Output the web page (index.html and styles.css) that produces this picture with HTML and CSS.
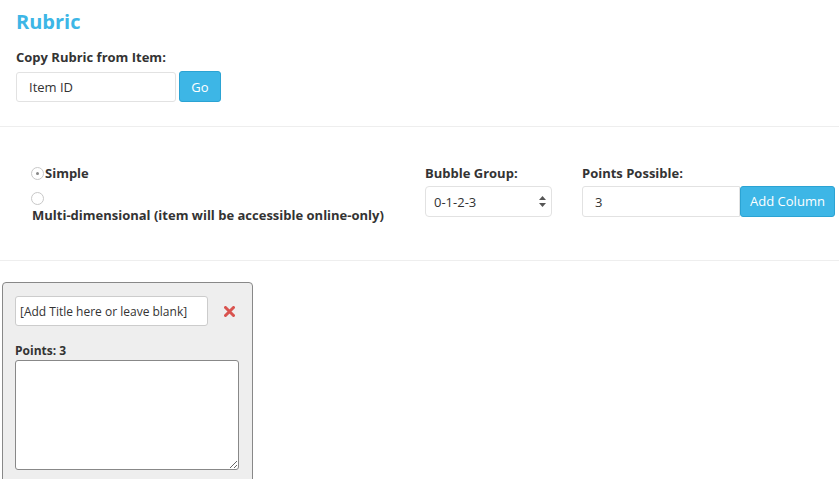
FILE: index.html
```html
<!DOCTYPE html>
<html lang="en">
<head>
<meta charset="UTF-8" />
<meta name="viewport" content="width=device-width, initial-scale=1.0" />
<title>Rubric</title>
<link rel="stylesheet" href="styles.css">
</head>
<body>
  <div class="copy-section">
    <h1>Rubric</h1>
    <label class="field-label" for="itemId">Copy Rubric from Item:</label>
    <div class="copy-row">
      <input type="text" id="itemId" class="text-input item-input" placeholder="Item ID" />
      <button class="btn go-btn">Go</button>
    </div>
  </div>

  <div class="options-section">
    <div class="type-choice">
      <label class="radio-line">
        <span class="radio checked"></span>Simple
      </label>
      <span class="radio"></span>
      <div class="multi-label">Multi-dimensional (item will be accessible online-only)</div>
    </div>

    <div class="bubble-group">
      <div class="field-label">Bubble Group:</div>
      <div class="select-wrap">
        <select class="bubble-select">
          <option>0-1-2-3</option>
        </select>
        <svg class="select-arrows" width="7" height="11" viewBox="0 0 7 11">
          <path d="M3.5 0 L7 4 L0 4 Z" fill="#555" />
          <path d="M3.5 11 L7 7 L0 7 Z" fill="#555" />
        </svg>
      </div>
    </div>

    <div class="points-group">
      <div class="field-label">Points Possible:</div>
      <div class="points-row">
        <input type="text" class="text-input points-input" value="3" />
        <button class="btn add-btn">Add Column</button>
      </div>
    </div>
  </div>

  <div class="columns-section">
    <div class="rubric-card">
      <div class="card-top">
        <input type="text" class="text-input title-input" value="[Add Title here or leave blank]" />
        <svg class="remove-icon" width="11" height="11" viewBox="0 0 11 11">
          <path d="M1.5 1.5 L9.5 9.5 M9.5 1.5 L1.5 9.5" stroke="#d9534f" stroke-width="3" stroke-linecap="round" />
        </svg>
      </div>
      <div class="points-label">Points: 3</div>
      <textarea class="card-text"></textarea>
    </div>
  </div>
</body>
</html>
```

FILE: styles.css
```css
body {
  font-family: "Open Sans", Arial, sans-serif;
  font-size: 13px;
  color: #333;
  background: #fff;
  margin: 0;
  padding: 0;
}

h1 {
  font-size: 20px;
  line-height: 28px;
  font-weight: 700;
  color: #3db6e6;
  margin: 0 0 12px;
}

.copy-section {
  padding: 8px 16px 24px;
  border-bottom: 1px solid #eee;
}

.field-label {
  display: block;
  font-weight: 700;
  font-size: 13px;
  line-height: 18px;
  margin-bottom: 5px;
}

.copy-row,
.points-row {
  display: flex;
  align-items: center;
}

.text-input {
  font-family: "Open Sans", Arial, sans-serif;
  font-size: 13px;
  color: #333;
  height: 30px;
  box-sizing: border-box;
  border: 1px solid #e2e2e2;
  border-radius: 3px;
  padding: 0 12px;
  background: #fff;
  outline: none;
}

.text-input::placeholder {
  color: #333;
}

.item-input {
  width: 160px;
}

.btn {
  font-family: "Open Sans", Arial, sans-serif;
  font-size: 13px;
  color: #fff;
  background: #3db6e6;
  border: 1px solid #2ba3d3;
  border-radius: 3px;
  height: 31px;
  padding: 0 12px;
  cursor: pointer;
}

.go-btn {
  margin-left: 3px;
  width: 42px;
  padding: 0;
}

.options-section {
  display: flex;
  padding: 37px 0 36px 30px;
  border-bottom: 1px solid #eee;
}

.options-section .field-label {
  margin-bottom: 4px;
}

.type-choice {
  width: 395px;
}

.radio-line {
  display: flex;
  align-items: center;
  font-weight: 700;
  line-height: 18px;
  height: 18px;
}

.radio {
  display: block;
  width: 11px;
  height: 11px;
  border: 1px solid #c8c8c8;
  border-radius: 50%;
  position: relative;
  margin: 1px 1px 0 1px;
}

.radio.checked::after {
  content: "";
  position: absolute;
  left: 4px;
  top: 4px;
  width: 3px;
  height: 3px;
  border-radius: 50%;
  background: #888;
}

.type-choice > .radio {
  margin-top: 10px;
}

.multi-label {
  font-weight: 700;
  line-height: 18px;
  margin: 1px 0 0 2px;
}

.bubble-group {
  width: 157px;
}

.select-wrap {
  position: relative;
  width: 127px;
}

.bubble-select {
  appearance: none;
  -webkit-appearance: none;
  width: 127px;
  height: 31px;
  font-family: "Open Sans", Arial, sans-serif;
  font-size: 13px;
  color: #333;
  background: #fff;
  border: 1px solid #e2e2e2;
  border-radius: 4px;
  padding: 0 8px;
  outline: none;
}

.select-arrows {
  position: absolute;
  right: 6px;
  top: 10px;
}

.points-input {
  width: 158px;
  height: 31px;
  border-radius: 3px 0 0 3px;
}

.add-btn {
  width: 95px;
  padding: 0;
  margin-top: -1px;
}

.columns-section {
  padding: 21px 0 0 2px;
}

.rubric-card {
  width: 251px;
  box-sizing: border-box;
  height: 220px;
  background: #eee;
  border: 1px solid #888;
  border-radius: 4px;
  padding: 13px 12px;
}

.card-top {
  display: flex;
  align-items: center;
}

.title-input {
  width: 193px;
  height: 30px;
  padding: 0 4px;
  font-size: 12px;
  border-color: #ccc;
  border-radius: 3px;
}

.remove-icon {
  margin-left: 16px;
}

.points-label {
  font-weight: 700;
  font-size: 12px;
  line-height: 16px;
  margin-top: 17px;
}

.card-text {
  display: block;
  width: 224px;
  height: 110px;
  box-sizing: border-box;
  border: 1px solid #888;
  border-radius: 3px;
  background: #fff;
  margin-top: 1px;
}
```
